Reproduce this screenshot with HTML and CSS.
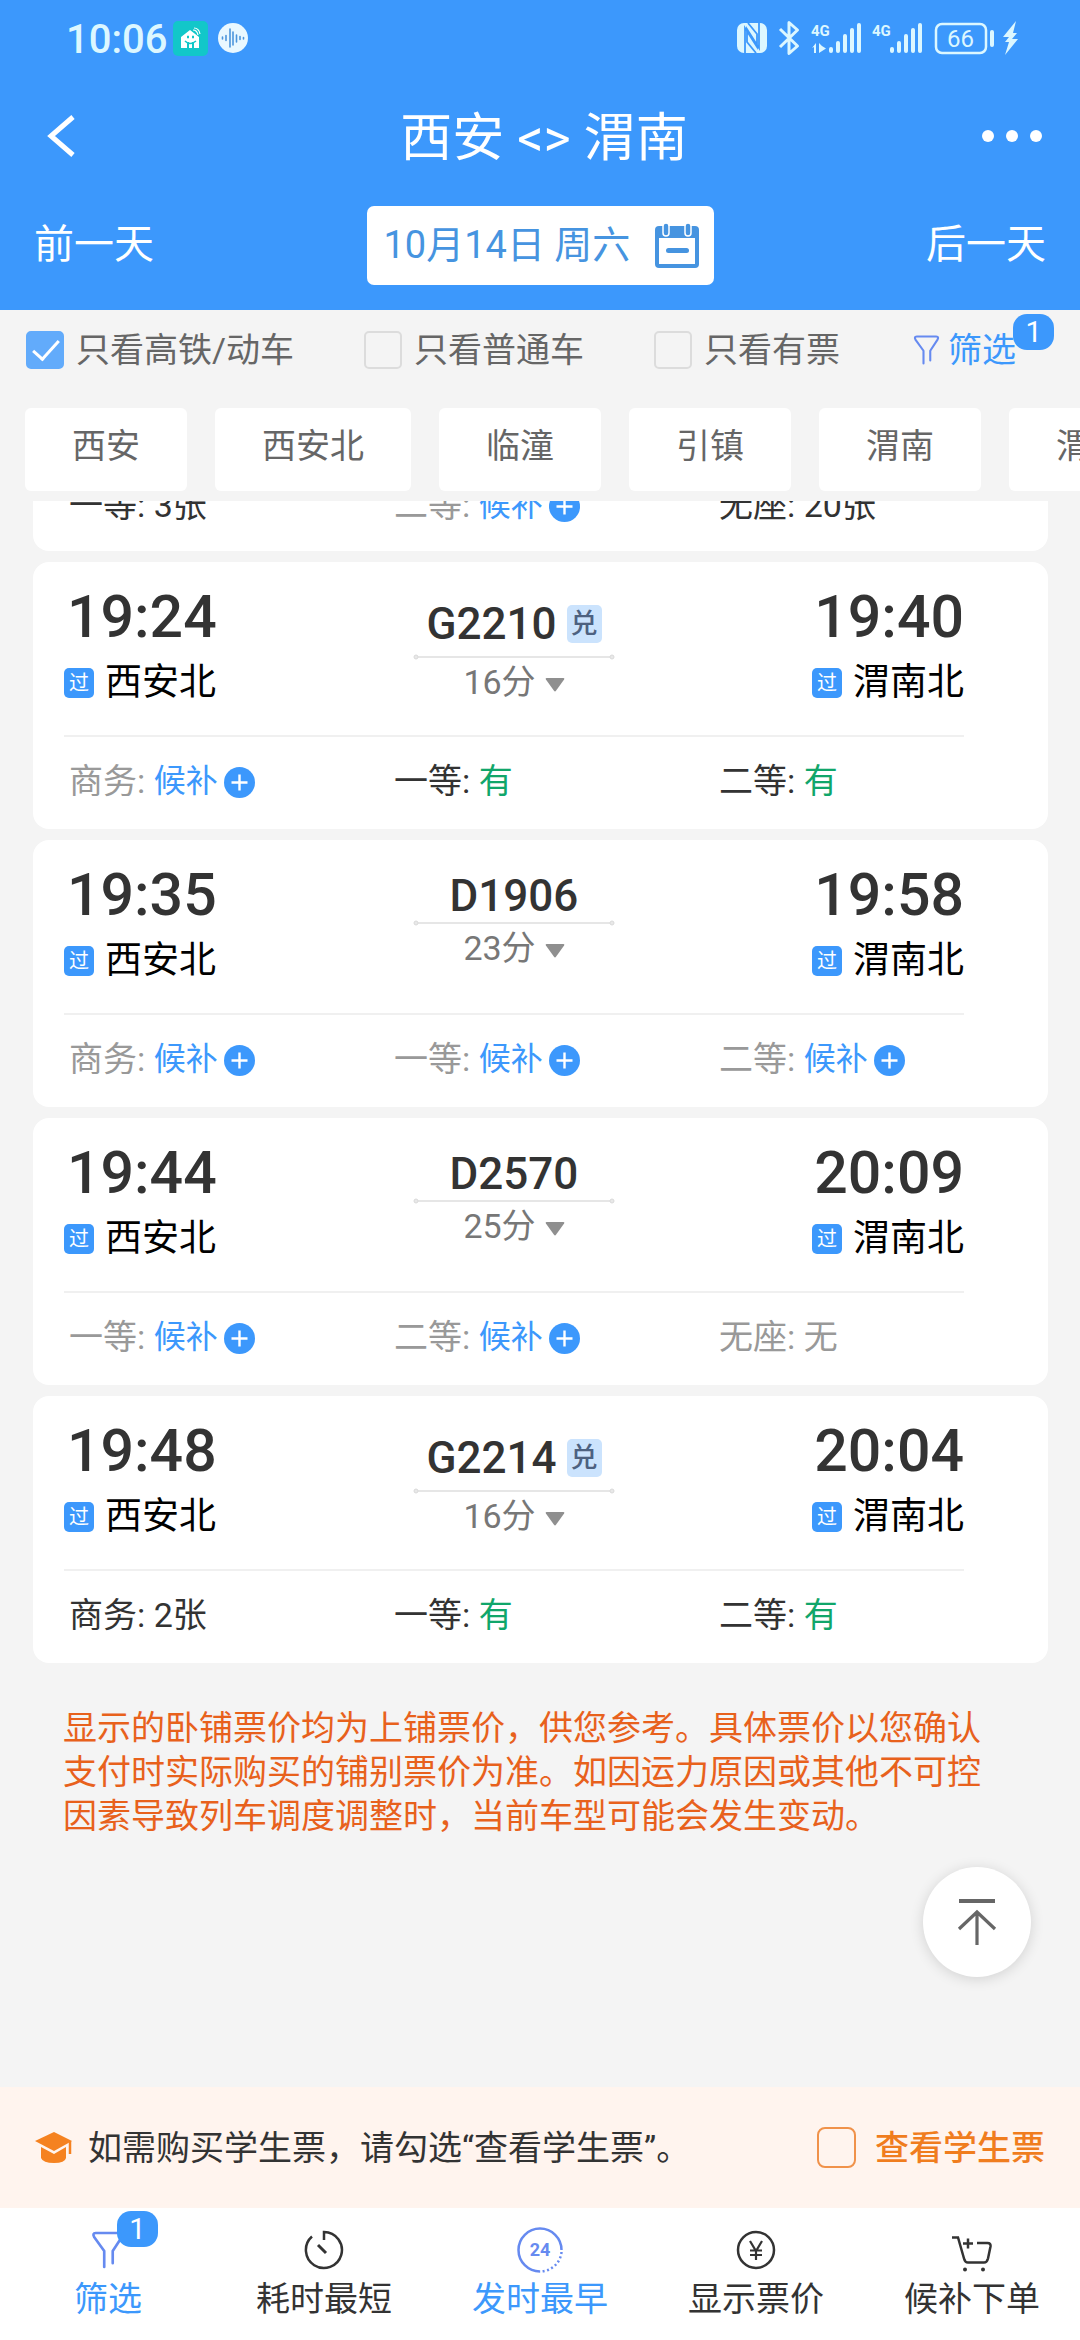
FILE: index.html
```
<!DOCTYPE html>
<html lang="zh-CN">
<head>
    <meta charset="UTF-8">
    <meta name="viewport" content="width=device-width, initial-scale=1.0">
    <title>西安 - 渭南</title>
    <link rel="stylesheet" href="styles.css">
</head>
<body>
    <!-- shared icons -->
    <svg class="icon-defs" width="0" height="0">
        <symbol id="icon-plus" viewBox="0 0 31 31">
            <circle cx="15.5" cy="15.5" r="15.5" fill="#3c98fc"/>
            <path d="M15.5 7.5v16M7.5 15.5h16" stroke="#fff" stroke-width="2.4"/>
        </symbol>
        <symbol id="icon-line" viewBox="0 0 202 6">
            <path d="M5 3h192" stroke="#dedede" stroke-width="1.5"/>
            <circle cx="3" cy="3" r="2" fill="#e8e8e8" stroke="#dadada"/>
            <circle cx="199" cy="3" r="2" fill="#e8e8e8" stroke="#dadada"/>
        </symbol>
        <symbol id="icon-arrow" viewBox="0 0 20 14">
            <path d="M1.5 0h17q1.500 0 .6 1.500L11 12.800q-1 1.200-2 0L.9 1.500Q0 0 1.500 0z" fill="#8f8f8f"/>
        </symbol>
        <symbol id="icon-funnel" viewBox="0 0 36 40">
            <path d="M14 38V21L3.500 6.500Q1 2 5 2h26q4 0 1.500 4.500L23 21v13" fill="none" stroke="#668af0" stroke-width="2.800" stroke-linecap="round" stroke-linejoin="round"/>
        </symbol>
    </svg>

    <header class="header">
        <div class="status-bar">
            <span class="clock">10:06</span>
            <svg class="app-icon" width="35" height="35" viewBox="0 0 35 35">
                <rect width="35" height="35" rx="5" fill="#12c7c9"/>
                <path d="M8 27V16l9-7 9 7v11h-5v-6h-2v6h-3v-6h-2v6z" fill="#fff"/>
                <path d="M12 20q5 5 11 0" stroke="#12c7c9" stroke-width="1.500" fill="none"/>
                <path d="M14 16h2M19 16h2" stroke="#12c7c9" stroke-width="2.500"/>
                <path d="M20 9q4 0 5 5M21 7q5 0 6 6" stroke="#fff" stroke-width="1.200" fill="none"/>
            </svg>
            <svg class="voice-icon" width="30" height="30" viewBox="0 0 30 30">
                <circle cx="15" cy="15" r="15" fill="#e9f8ff"/>
                <path d="M4.500 14v2M8 12.500v5M12 6v18M15 9v13M18.500 12v7M22 13.500v3M25.500 14.500v1.500" stroke="#4c95dc" stroke-width="1.600" stroke-linecap="round"/>
            </svg>
            <svg class="status-icons" width="284" height="36" viewBox="736 19 284 36">
                <g fill="#dcf7ff">
                    <rect x="737" y="22" width="30" height="30" rx="7"/>
                    <path d="M745 52V27l12 19V33l-9-11M759 22v25l-12-19v13l9 11" fill="none" stroke="#3c98fc" stroke-width="1.800"/>
                    <path d="M780 28l17.500 17-8.500 7.500v-31l8.500 7.500L780 46" fill="none" stroke="#dcf7ff" stroke-width="3" stroke-linejoin="round"/>
                    <text class="net-text" x="811" y="35">4G</text>
                    <text class="net-text" x="872" y="35">4G</text>
                    <path d="M812 47l4-5v10h-2v-6zM819 42v10l7-4.500-4-2.500z"/>
                    <rect x="829" y="46" width="4" height="6" rx="2"/>
                    <rect x="836" y="40" width="4" height="12" rx="2"/>
                    <rect x="843" y="33" width="4" height="19" rx="2"/>
                    <rect x="850" y="27" width="4" height="25" rx="2"/>
                    <rect x="857" y="22" width="4" height="30" rx="2"/>
                    <rect x="890" y="46" width="4" height="6" rx="2"/>
                    <rect x="897" y="40" width="4" height="12" rx="2"/>
                    <rect x="904" y="33" width="4" height="19" rx="2"/>
                    <rect x="911" y="27" width="4" height="25" rx="2"/>
                    <rect x="918" y="22" width="4" height="30" rx="2"/>
                    <rect x="936" y="23" width="50" height="29" rx="6" fill="none" stroke="#dcf7ff" stroke-width="2.500"/>
                    <rect x="990" y="29" width="4" height="17" rx="2"/>
                    <text class="battery-text" x="947" y="46">66</text>
                    <path d="M1016 20l-13 16h6l-4 5h4l-4 13 13-16h-6l5-6h-4z"/>
                </g>
            </svg>
        </div>
        <div class="title-bar">
            <button class="icon-button" aria-label="返回">
                <svg width="30" height="42" viewBox="0 0 30 42"><path d="M27 2L5 21l22 19" fill="none" stroke="#fff" stroke-width="5"/></svg>
            </button>
            <h1 class="title">西安 &lt;&gt; 渭南</h1>
            <button class="icon-button" aria-label="更多">
                <svg width="60" height="14" viewBox="0 0 60 14"><g fill="#fff"><circle cx="6" cy="7" r="6"/><circle cx="30" cy="7" r="6"/><circle cx="54" cy="7" r="6"/></g></svg>
            </button>
        </div>
        <div class="date-bar">
            <button class="day-button">前一天</button>
            <button class="date-button">10月14日 周六
                <svg width="44" height="45" viewBox="0 0 44 45">
                    <rect y="3" width="44" height="42" rx="4" fill="#4694e0"/>
                    <rect x="4" y="15" width="36" height="26" fill="#fff"/>
                    <rect x="8" y="0" width="6" height="13" rx="3" fill="#4694e0" stroke="#fff" stroke-width="1.500"/>
                    <rect x="30" y="0" width="6" height="13" rx="3" fill="#4694e0" stroke="#fff" stroke-width="1.500"/>
                    <rect x="11" y="25" width="23" height="5" rx="2.500" fill="#4694e0"/>
                </svg>
            </button>
            <button class="day-button">后一天</button>
        </div>
    </header>

    <div class="filter-bar">
        <label class="check-label"><input type="checkbox" class="check" checked>只看高铁/动车</label>
        <label class="check-label"><input type="checkbox" class="check">只看普通车</label>
        <label class="check-label"><input type="checkbox" class="check">只看有票</label>
        <button class="filter-button">
            <svg width="27" height="30"><use href="#icon-funnel"/></svg>筛选
            <span class="count count-top">1</span>
        </button>
    </div>

    <div class="station-tabs">
        <button class="station-tab">西安</button>
        <button class="station-tab">西安北</button>
        <button class="station-tab">临潼</button>
        <button class="station-tab">引镇</button>
        <button class="station-tab">渭南</button>
        <button class="station-tab">渭南北</button>
    </div>

    <main class="train-list">
        <!-- scrolled partly under the station tabs -->
        <section class="train-card scrolled-card">
            <div class="seats">
                <div class="seat">一等: 3张</div>
                <div class="seat none">二等: <span class="wait">候补</span><svg class="plus"><use href="#icon-plus"/></svg></div>
                <div class="seat">无座: 20张</div>
            </div>
        </section>

        <section class="train-card">
            <div class="trip">
                <div class="stop">
                    <div class="time">19:24</div>
                    <div class="station"><span class="pass">过</span>西安北</div>
                </div>
                <div class="train">
                    <div class="train-no has-tag">G2210<span class="tag">兑</span></div>
                    <svg class="line"><use href="#icon-line"/></svg>
                    <div class="duration">16分<svg class="arrow"><use href="#icon-arrow"/></svg></div>
                </div>
                <div class="stop stop-end">
                    <div class="time">19:40</div>
                    <div class="station"><span class="pass">过</span>渭南北</div>
                </div>
            </div>
            <div class="seats">
                <div class="seat none">商务: <span class="wait">候补</span><svg class="plus"><use href="#icon-plus"/></svg></div>
                <div class="seat">一等: <span class="have">有</span></div>
                <div class="seat">二等: <span class="have">有</span></div>
            </div>
        </section>

        <section class="train-card">
            <div class="trip">
                <div class="stop">
                    <div class="time">19:35</div>
                    <div class="station"><span class="pass">过</span>西安北</div>
                </div>
                <div class="train">
                    <div class="train-no">D1906</div>
                    <svg class="line"><use href="#icon-line"/></svg>
                    <div class="duration">23分<svg class="arrow"><use href="#icon-arrow"/></svg></div>
                </div>
                <div class="stop stop-end">
                    <div class="time">19:58</div>
                    <div class="station"><span class="pass">过</span>渭南北</div>
                </div>
            </div>
            <div class="seats">
                <div class="seat none">商务: <span class="wait">候补</span><svg class="plus"><use href="#icon-plus"/></svg></div>
                <div class="seat none">一等: <span class="wait">候补</span><svg class="plus"><use href="#icon-plus"/></svg></div>
                <div class="seat none">二等: <span class="wait">候补</span><svg class="plus"><use href="#icon-plus"/></svg></div>
            </div>
        </section>

        <section class="train-card">
            <div class="trip">
                <div class="stop">
                    <div class="time">19:44</div>
                    <div class="station"><span class="pass">过</span>西安北</div>
                </div>
                <div class="train">
                    <div class="train-no">D2570</div>
                    <svg class="line"><use href="#icon-line"/></svg>
                    <div class="duration">25分<svg class="arrow"><use href="#icon-arrow"/></svg></div>
                </div>
                <div class="stop stop-end">
                    <div class="time">20:09</div>
                    <div class="station"><span class="pass">过</span>渭南北</div>
                </div>
            </div>
            <div class="seats">
                <div class="seat none">一等: <span class="wait">候补</span><svg class="plus"><use href="#icon-plus"/></svg></div>
                <div class="seat none">二等: <span class="wait">候补</span><svg class="plus"><use href="#icon-plus"/></svg></div>
                <div class="seat none">无座: 无</div>
            </div>
        </section>

        <section class="train-card">
            <div class="trip">
                <div class="stop">
                    <div class="time">19:48</div>
                    <div class="station"><span class="pass">过</span>西安北</div>
                </div>
                <div class="train">
                    <div class="train-no has-tag">G2214<span class="tag">兑</span></div>
                    <svg class="line"><use href="#icon-line"/></svg>
                    <div class="duration">16分<svg class="arrow"><use href="#icon-arrow"/></svg></div>
                </div>
                <div class="stop stop-end">
                    <div class="time">20:04</div>
                    <div class="station"><span class="pass">过</span>渭南北</div>
                </div>
            </div>
            <div class="seats">
                <div class="seat">商务: 2张</div>
                <div class="seat">一等: <span class="have">有</span></div>
                <div class="seat">二等: <span class="have">有</span></div>
            </div>
        </section>

        <p class="notice">显示的卧铺票价均为上铺票价，供您参考。具体票价以您确认支付时实际购买的铺别票价为准。如因运力原因或其他不可控因素导致列车调度调整时，当前车型可能会发生变动。</p>
    </main>

    <footer class="footer">
        <button class="back-top" aria-label="回到顶部">
            <svg width="40" height="48" viewBox="0 0 40 48"><path d="M2 3h36" stroke="#666" stroke-width="4"/><path d="M20 14v33M2 31l18-17 18 17" fill="none" stroke="#666" stroke-width="3.200"/></svg>
        </button>
        <div class="student-bar">
            <svg width="38" height="32" viewBox="0 0 38 32">
                <path d="M19 0l18 9-18 10L0 9z" fill="#f58220"/>
                <path d="M6 15l13 7 12-7v11q-1 5-12 5T6 26z" fill="#f58220"/>
                <path d="M35 9v13" stroke="#f58220" stroke-width="2.500"/>
            </svg>
            <span class="student-text">如需购买学生票，请勾选“查看学生票”。</span>
            <label class="student-label"><input type="checkbox" class="check check-orange">查看学生票</label>
        </div>
        <nav class="bottom-nav">
            <button class="nav-item active">
                <span class="nav-icon">
                    <svg width="34" height="38"><use href="#icon-funnel"/></svg>
                    <span class="count count-nav">1</span>
                </span>筛选
            </button>
            <button class="nav-item">
                <span class="nav-icon"><svg width="40" height="40" viewBox="0 0 40 40"><path d="M20 10V2a18 18 0 1 1-12 4.500" fill="none" stroke="#333" stroke-width="2.500"/><path d="M14 15l8 8" stroke="#333" stroke-width="3"/></svg></span>耗时最短
            </button>
            <button class="nav-item active">
                <span class="nav-icon"><svg width="46" height="46" viewBox="0 0 46 46"><path d="M23 44.500A21.500 21.500 0 1 1 44.500 23" fill="none" stroke="#668af0" stroke-width="2.500"/><path d="M44.500 25A21.500 21.500 0 0 1 23 44.500" fill="none" stroke="#668af0" stroke-width="2.500" stroke-dasharray="2 2.500"/><text class="icon-24" x="23" y="29" text-anchor="middle">24</text></svg></span>发时最早
            </button>
            <button class="nav-item">
                <span class="nav-icon"><svg width="40" height="40" viewBox="0 0 40 40"><circle cx="20" cy="20" r="18" fill="none" stroke="#333" stroke-width="2.500"/><path d="M14 11l6 10 6-10M20 20v10M14 20.500h12M14 25h12" fill="none" stroke="#333" stroke-width="2.200"/></svg></span>显示票价
            </button>
            <button class="nav-item">
                <span class="nav-icon nav-cart"><svg width="40" height="36" viewBox="0 0 40 36"><path d="M0 1.500h6l6 21q1 4 4 4h16q3 0 4-4l2.500-12q.5-3.500-3-3.500H25M11 7.500h10M16 2.500v10" fill="none" stroke="#333" stroke-width="2.500"/><circle cx="13" cy="33.500" r="2" fill="#333"/><circle cx="31" cy="33.500" r="2" fill="#333"/></svg></span>候补下单
            </button>
        </nav>
    </footer>
</body>
</html>
```

FILE: styles.css
```
* {
    box-sizing: border-box;
}
body {
    margin: 0;
    min-height: 100vh;
    display: flex;
    flex-direction: column;
    font-family: Roboto, "Noto Sans CJK SC", sans-serif;
    font-size: 34px;
    line-height: 44px;
    color: #333;
    background-color: #f4f4f4;
    overflow-x: hidden;
}
button {
    padding: 0;
    border: none;
    background: none;
    font: inherit;
    color: inherit;
    cursor: pointer;
}
svg {
    display: block;
    flex: none;
}
.icon-defs {
    position: absolute;
}

/* header */
.header {
    background-color: #3c98fc;
    color: #fff;
    padding-bottom: 16px;
}
.status-bar {
    display: flex;
    align-items: center;
    height: 76px;
    padding: 0 60px 0 66px;
}
.clock {
    padding-top: 4px;
    font-size: 40px;
    font-weight: 500;
    color: #dcf7ff;
}
.app-icon {
    margin-left: 6px;
}
.voice-icon {
    margin-left: 10px;
}
.status-icons {
    margin-left: auto;
}
.net-text {
    font-size: 15px;
    font-weight: bold;
}
.battery-text {
    font-size: 24px;
}
.title-bar {
    display: flex;
    align-items: center;
    justify-content: space-between;
    height: 120px;
    padding: 0 38px 0 46px;
}
.icon-button {
    display: flex;
    width: 60px;
}
.title {
    margin: 0;
    padding-top: 6px;
    font-size: 52px;
    font-weight: normal;
    line-height: 72px;
}
.date-bar {
    display: flex;
    align-items: center;
    justify-content: space-between;
    height: 98px;
    padding: 0 34px;
}
.day-button {
    font-size: 40px;
}
.date-button {
    display: flex;
    align-items: center;
    justify-content: space-between;
    width: 347px;
    height: 79px;
    padding: 0 15px 0 17px;
    border-radius: 7px;
    background-color: #fff;
    color: #4694e0;
    font-size: 38px;
}

/* filters */
.filter-bar {
    display: flex;
    align-items: center;
    gap: 70px;
    height: 80px;
    padding-left: 26px;
    color: #666;
    white-space: nowrap;
}
.check-label {
    display: flex;
    align-items: center;
    gap: 12px;
}
.check {
    appearance: none;
    flex: none;
    width: 38px;
    height: 38px;
    margin: 0;
    border: 2px solid #dcdcdc;
    border-radius: 5px;
}
.check:checked {
    border-color: #62abfb;
    background-color: #62abfb;
}
.check:checked::after {
    content: "";
    display: block;
    width: 23px;
    height: 11px;
    margin: 7px 0 0 5px;
    border: solid #fff;
    border-width: 0 0 3px 3px;
    transform: rotate(-48deg);
}
.filter-button {
    position: relative;
    display: flex;
    align-items: center;
    gap: 8px;
    margin-left: 3px;
    color: #3c98fc;
}
.count {
    position: absolute;
    width: 41px;
    height: 36px;
    border-radius: 14px;
    background-color: #3c98fc;
    color: #fff;
    font-size: 29px;
    line-height: 36px;
    text-align: center;
}
.count-top {
    left: 100px;
    top: -14px;
}
.station-tabs {
    display: flex;
    gap: 28px;
    margin-top: 18px;
    padding-left: 25px;
    overflow: hidden;
}
.station-tab {
    flex: none;
    height: 83px;
    padding: 0 47px 8px;
    border-radius: 6px;
    background-color: #fff;
    color: #666;
}

/* train list */
.train-list {
    flex: 1;
    margin-top: 10px;
    overflow: hidden;
}
.train-card {
    margin: 0 32px 11px 33px;
    padding: 0 84px 0 31px;
    border-radius: 16px;
    background-color: #fff;
}
.scrolled-card {
    margin-top: -42px;
}
.trip {
    display: flex;
    justify-content: space-between;
    height: 175px;
    border-bottom: 2px solid #f0f0f0;
}
.stop {
    flex: 1;
    padding-top: 20px;
}
.stop-end {
    display: flex;
    flex-direction: column;
    align-items: flex-end;
}
.time {
    padding-left: 3px;
    font-size: 59px;
    font-weight: 500;
    line-height: 70px;
}
.station {
    display: flex;
    align-items: center;
    gap: 11px;
    height: 62px;
    color: #000;
    font-size: 37px;
}
.pass {
    width: 30px;
    height: 30px;
    border-radius: 5px;
    background-color: #3c98fc;
    color: #fff;
    font-size: 20px;
    line-height: 30px;
    text-align: center;
}
.train {
    display: flex;
    flex-direction: column;
    align-items: center;
    padding-top: 32px;
}
.train-no {
    display: flex;
    align-items: center;
    height: 48px;
    font-size: 44px;
    font-weight: 500;
}
.has-tag {
    height: 60px;
}
.tag {
    width: 35px;
    height: 38px;
    margin-left: 10px;
    border-radius: 5px;
    background-color: #cbe3fd;
    color: #4d6180;
    font-size: 27px;
    line-height: 38px;
    text-align: center;
}
.line {
    width: 202px;
    height: 6px;
}
.duration {
    display: flex;
    align-items: center;
    gap: 9px;
    color: #777;
}
.arrow {
    width: 20px;
    height: 14px;
    margin-top: 6px;
}
.seats {
    display: grid;
    grid-template-columns: 325px 325px 1fr;
    align-items: center;
    height: 92px;
    padding: 0 0 4px 5px;
    white-space: nowrap;
}
.scrolled-card .seats {
    padding-bottom: 0;
}
.seat {
    display: flex;
    align-items: center;
    white-space: pre;
}
.none {
    color: #999;
}
.wait {
    color: #3c98fc;
    font-size: 32px;
}
.have {
    color: #10a66a;
}
.plus {
    width: 31px;
    height: 31px;
    margin: 2px 0 0 6px;
}
.notice {
    margin: 0;
    padding: 32px 72px 31px 63px;
    color: #e8611c;
}

/* footer */
.footer {
    position: relative;
}
.back-top {
    position: absolute;
    right: 49px;
    bottom: 363px;
    display: flex;
    align-items: center;
    justify-content: center;
    width: 108px;
    height: 110px;
    border-radius: 50%;
    background-color: #fff;
    box-shadow: 0 2px 14px rgba(0, 0, 0, 0.14);
}
.student-bar {
    display: flex;
    align-items: center;
    height: 121px;
    padding: 0 35px;
    background-color: #fff4ee;
}
.student-text {
    margin-left: 15px;
}
.student-label {
    display: flex;
    align-items: center;
    gap: 19px;
    margin-left: auto;
    color: #f07d1e;
    font-weight: 500;
}
.check-orange {
    width: 39px;
    height: 41px;
    border-color: #f0924a;
    border-radius: 8px;
}
.bottom-nav {
    display: flex;
    height: 132px;
    background-color: #fff;
}
.nav-item {
    flex: 1;
    display: flex;
    flex-direction: column;
    align-items: center;
    padding-top: 19px;
}
.nav-icon {
    position: relative;
    display: flex;
    align-items: center;
    justify-content: center;
    height: 46px;
    margin-bottom: 4px;
}
.nav-cart {
    padding-top: 8px;
}
.count-nav {
    left: 26px;
    top: -16px;
}
.active {
    color: #3c98fc;
}
.icon-24 {
    font-size: 18px;
    font-weight: bold;
    fill: #668af0;
}
```
